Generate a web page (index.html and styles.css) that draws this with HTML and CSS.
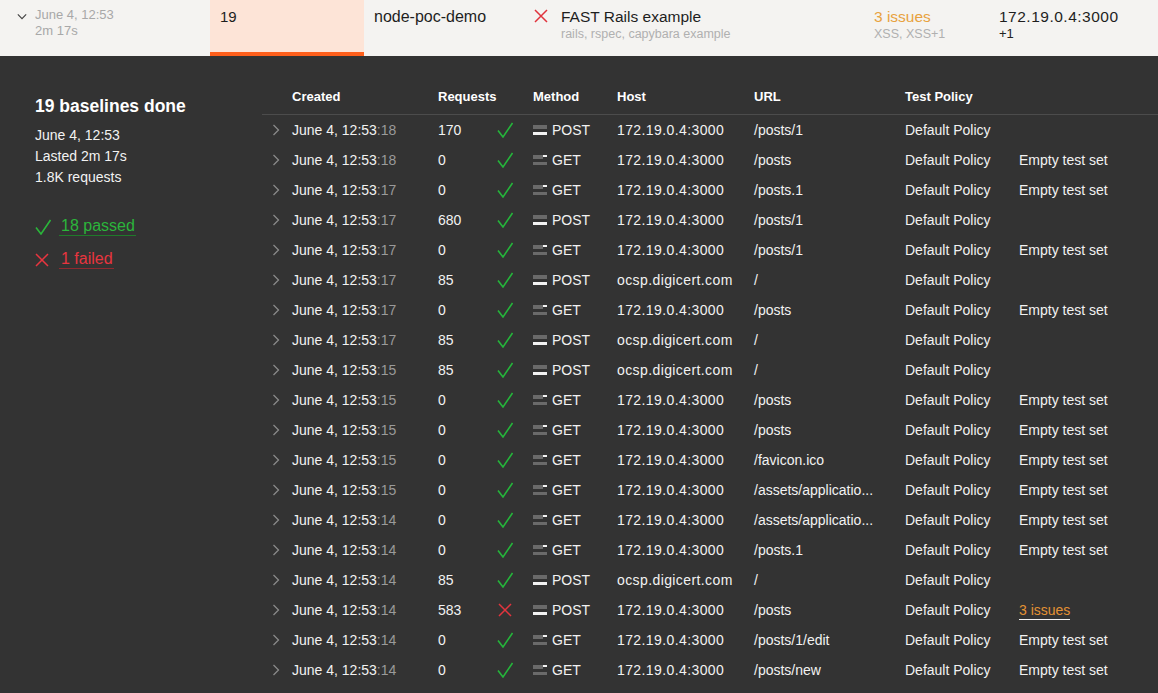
FILE: index.html
```html
<!DOCTYPE html>
<html>
<head>
<meta charset="utf-8">
<link rel="stylesheet" href="styles.css">
</head>
<body>
<svg class="defs" width="0" height="0">
  <defs>
    <symbol id="chk" viewBox="0 0 16 16"><polyline points="1,8.5 6,15 15.5,1" fill="none" stroke="currentColor" stroke-width="1.6"/></symbol>
    <symbol id="xx" viewBox="0 0 14 14"><path d="M1 1 L13 13 M13 1 L1 13" fill="none" stroke="currentColor" stroke-width="1.5"/></symbol>
    <symbol id="chr" viewBox="0 0 8 12"><polyline points="1.5,1 6.5,6 1.5,11" fill="none" stroke="currentColor" stroke-width="1.3"/></symbol>
    <symbol id="chd" viewBox="0 0 12 8"><polyline points="1,1.5 6,6.5 11,1.5" fill="none" stroke="currentColor" stroke-width="1.4"/></symbol>
    <symbol id="mpost" viewBox="0 0 14 10"><rect x="0" y="0" width="14" height="4" fill="#6a6a6a"/><rect x="0" y="7" width="14" height="3" fill="#f2f2f2"/></symbol>
    <symbol id="mget" viewBox="0 0 14 10"><rect x="0" y="0" width="10" height="4" fill="#6a6a6a"/><rect x="10" y="0" width="4" height="2" fill="#f2f2f2"/><rect x="0" y="7" width="14" height="3" fill="#6a6a6a"/></symbol>
  </defs>
</svg>

<header class="topbar">
  <div class="tcell c-when">
    <svg class="tchev"><use href="#chd"/></svg>
    <div>
      <div class="muted">June 4, 12:53</div>
      <div class="muted">2m 17s</div>
    </div>
  </div>
  <div class="tcell c-num selected"><span class="big">19</span></div>
  <div class="tcell c-app"><span class="big">node-poc-demo</span></div>
  <div class="tcell c-test">
    <svg class="tx"><use href="#xx"/></svg>
    <div>
      <div class="mid">FAST Rails example</div>
      <div class="sub">rails, rspec, capybara example</div>
    </div>
  </div>
  <div class="tcell c-iss">
    <div>
      <div class="orange">3 issues</div>
      <div class="sub">XSS, XSS+1</div>
    </div>
  </div>
  <div class="tcell c-host">
    <div>
      <div class="big host">172.19.0.4:3000</div>
      <div class="plus">+1</div>
    </div>
  </div>
</header>

<main class="main">
  <aside class="summary">
    <h2 class="title">19 baselines done</h2>
    <div class="info">June 4, 12:53</div>
    <div class="info">Lasted 2m 17s</div>
    <div class="info">1.8K requests</div>
    <div class="stat pass"><svg class="sicon"><use href="#chk"/></svg><span class="slink">18 passed</span></div>
    <div class="stat fail"><svg class="sicon sx"><use href="#xx"/></svg><span class="slink">1 failed</span></div>
  </aside>

  <section class="table">
    <div class="row head">
      <div></div><div>Created</div><div>Requests</div><div></div><div>Method</div><div>Host</div><div>URL</div><div>Test Policy</div><div></div>
    </div>
    <div id="rows"></div>
  </section>
</main>
<script src="app.js"></script>
</body>
</html>
```
FILE: app.js
```js
var data = [
  ["18","170",1,"POST","172.19.0.4:3000","/posts/1",""],
  ["18","0",1,"GET","172.19.0.4:3000","/posts","e"],
  ["17","0",1,"GET","172.19.0.4:3000","/posts.1","e"],
  ["17","680",1,"POST","172.19.0.4:3000","/posts/1",""],
  ["17","0",1,"GET","172.19.0.4:3000","/posts/1","e"],
  ["17","85",1,"POST","ocsp.digicert.com","/",""],
  ["17","0",1,"GET","172.19.0.4:3000","/posts","e"],
  ["17","85",1,"POST","ocsp.digicert.com","/",""],
  ["15","85",1,"POST","ocsp.digicert.com","/",""],
  ["15","0",1,"GET","172.19.0.4:3000","/posts","e"],
  ["15","0",1,"GET","172.19.0.4:3000","/posts","e"],
  ["15","0",1,"GET","172.19.0.4:3000","/favicon.ico","e"],
  ["15","0",1,"GET","172.19.0.4:3000","/assets/applicatio...","e"],
  ["14","0",1,"GET","172.19.0.4:3000","/assets/applicatio...","e"],
  ["14","0",1,"GET","172.19.0.4:3000","/posts.1","e"],
  ["14","85",1,"POST","ocsp.digicert.com","/",""],
  ["14","583",0,"POST","172.19.0.4:3000","/posts","i"],
  ["14","0",1,"GET","172.19.0.4:3000","/posts/1/edit","e"],
  ["14","0",1,"GET","172.19.0.4:3000","/posts/new","e"]
];
var html = "";
data.forEach(function (d) {
  var extra = d[6] === "e" ? '<span>Empty test set</span>' : d[6] === "i" ? '<span class="issues">3 issues</span>' : '';
  var st = d[2] ? '<svg class="st ok"><use href="#chk"/></svg>' : '<svg class="st bad"><use href="#xx"/></svg>';
  var m = d[3] === "POST" ? "mpost" : "mget";
  html += '<div class="row">' +
    '<div><svg class="rchev"><use href="#chr"/></svg></div>' +
    '<div>June 4, 12:53<span class="sec">:' + d[0] + '</span></div>' +
    '<div>' + d[1] + '</div>' +
    '<div>' + st + '</div>' +
    '<div class="meth"><svg class="mi"><use href="#' + m + '"/></svg>' + d[3] + '</div>' +
    '<div class="hostc">' + d[4] + '</div>' +
    '<div>' + d[5] + '</div>' +
    '<div>Default Policy</div>' +
    '<div>' + extra + '</div>' +
    '</div>';
});
document.getElementById("rows").innerHTML = html;
```
FILE: styles.css
```css
* { box-sizing: border-box; }
html, body { margin: 0; padding: 0; }
body {
  width: 1158px;
  height: 693px;
  overflow: hidden;
  background: #333333;
  font-family: "Liberation Sans", Arial, sans-serif;
  color: #f2f2f2;
}
.defs { position: absolute; width: 0; height: 0; }

.topbar {
  display: flex;
  height: 56px;
  background: #f4f3f1;
  color: #222;
}
.tcell {
  display: flex;
  align-items: flex-start;
  padding-top: 7px;
  height: 56px;
}
.c-when { width: 210px; padding-left: 17px; }
.tchev { width: 10px; height: 7px; color: #444; margin: 6px 8px 0 0; }
.muted { color: #a8a8a8; font-size: 13px; line-height: 16px; }
.c-num { width: 154px; padding-left: 10px; background: #fde4d7; border-bottom: 4px solid #ff5f1b; }
.big { font-size: 15.5px; line-height: 19px; color: #1e1e1e; }
.c-num .big { font-size: 15px; }
.c-app { width: 160px; padding-left: 10px; }
.c-app .big { font-size: 16px; }
.c-test { width: 340px; padding-left: 10px; }
.tx { width: 14px; height: 14px; color: #e0333d; margin: 2px 13px 0 0; flex: none; }
.mid { font-size: 15.5px; line-height: 19px; color: #1e1e1e; }
.sub { font-size: 12.5px; line-height: 16px; color: #b0b0b0; }
.c-iss { width: 125px; padding-left: 10px; }
.orange { font-size: 15.5px; line-height: 19px; color: #e8a23e; }
.c-host { flex: 1; padding-left: 10px; }
.host { letter-spacing: 0.5px; font-size: 15.5px; }
.plus { font-size: 13px; line-height: 16px; color: #222; }

.main { display: flex; }
.summary { width: 262px; padding: 39px 0 0 35px; }
.title { margin: 0 0 8px; font-size: 17.5px; line-height: 22px; font-weight: bold; color: #fff; }
.info { font-size: 14px; line-height: 21px; color: #f2f2f2; }
.stat { display: flex; align-items: center; font-size: 16px; line-height: 18px; }
.pass { margin-top: 29px; color: #2bb53b; }
.fail { margin-top: 14px; color: #e8353f; }
.sicon { width: 16px; height: 16px; margin-right: 8px; flex: none; }
.sx { width: 14px; height: 14px; margin-right: 10px; }
.slink { padding: 0 1px 0 2px; }
.pass .slink { border-bottom: 1px solid #1f7a2a; }
.fail .slink { border-bottom: 1px solid #8e2a30; }

.table { flex: 1; padding-top: 24px; }
.row {
  display: grid;
  grid-template-columns: 30px 146px 58px 37px 84px 137px 151px 114px 1fr;
  height: 30px;
  align-items: center;
  font-size: 14px;
  color: #f2f2f2;
  white-space: nowrap;
}
.row.head {
  height: 35px;
  font-size: 13px;
  font-weight: bold;
  color: #fff;
  border-bottom: 1px solid #4c4c4c;
  padding-bottom: 1px;
}
.rchev { width: 8px; height: 12px; color: #8a8a8a; margin-left: 10px; display: block; }
.sec { color: #9a9a9a; }
.st { width: 16px; height: 16px; display: block; margin-left: 1px; }
.st.ok { color: #25b53b; }
.st.bad { width: 14px; height: 14px; color: #e3343e; margin-left: 2px; }
.meth { display: flex; align-items: center; }
.mi { width: 14px; height: 10px; margin-right: 5px; }
.hostc { letter-spacing: 0.4px; }
.issues { color: #e39233; border-bottom: 1px solid #f2f2f2; padding-bottom: 1px; }
```
